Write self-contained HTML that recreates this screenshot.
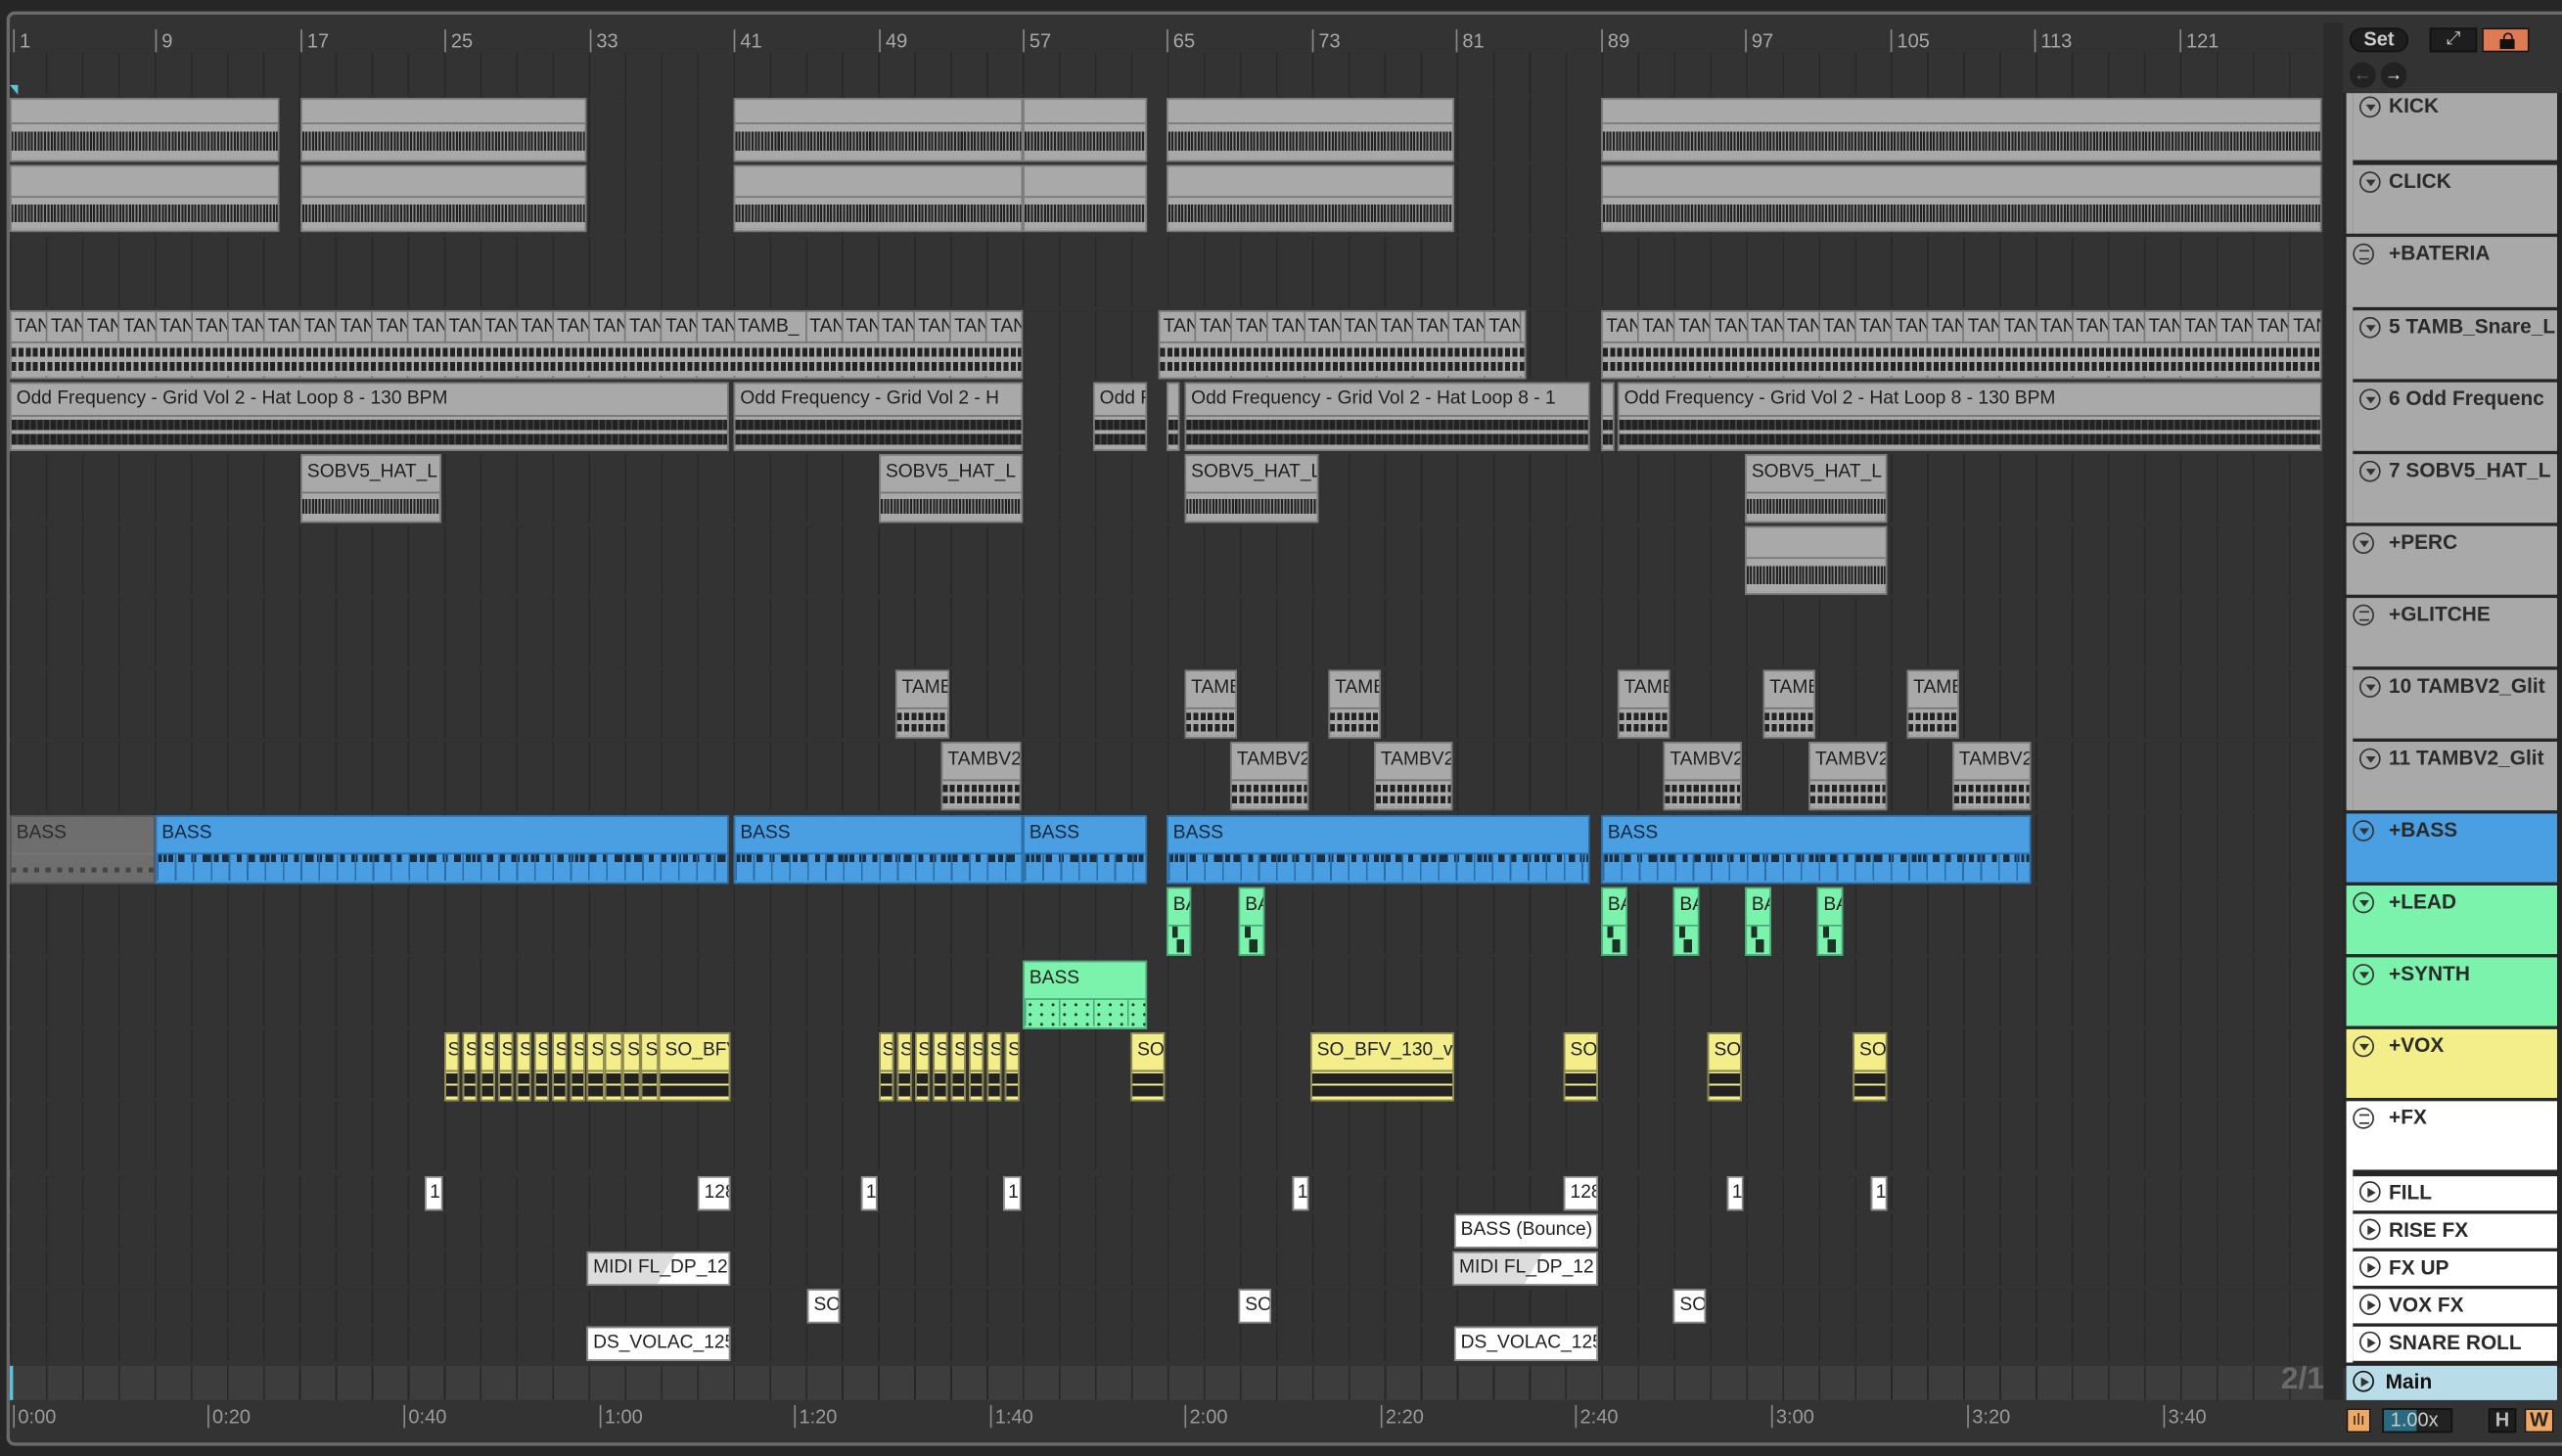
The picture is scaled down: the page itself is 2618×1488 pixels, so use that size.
<!DOCTYPE html>
<html><head><meta charset="utf-8"><style>
*{margin:0;padding:0;box-sizing:border-box}
html,body{width:2618px;height:1488px;overflow:hidden;background:#262626}
#s{position:absolute;left:0;top:0;width:1568px;height:891px;transform:scale(1.66964);transform-origin:0 0;background:#262626;font-family:"Liberation Sans",sans-serif}
.frame{position:absolute;left:4px;top:7px;width:1570px;height:878px;border:2px solid #6a6a6a;border-radius:5px;background:#333}
.lane{position:absolute;left:6px;width:1416px;background-color:#333;background-image:repeating-linear-gradient(90deg,#282828 0 1px,transparent 1px 22.14px)}
.num{position:absolute;top:18px;font-size:12px;color:#a8a8a8;border-left:1px solid #888;padding-left:3px;height:14px;line-height:14px}
.tm{position:absolute;top:860px;font-size:12px;color:#9a9a9a;border-left:1px solid #888;padding-left:2px;line-height:14px}
.c{position:absolute;overflow:hidden;background:#a9a9a9;font-size:11.5px;color:#1e1e1e;line-height:14px;padding-left:3px;white-space:nowrap;border:1px solid #7a7a7a}
.c i{position:absolute;left:0;right:0;top:16px;bottom:1px;border-top:1px solid #777}
.wk i{background:linear-gradient(#a9a9a9 0 22%,transparent 22% 78%,#a9a9a9 78%),repeating-linear-gradient(90deg,#222 0 1.2px,#8a8a8a 1.2px 2px)}
.wa i{background:linear-gradient(#a9a9a9 0 10%,transparent 10% 44%,#a9a9a9 44% 56%,transparent 56% 90%,#a9a9a9 90%),repeating-linear-gradient(90deg,#222 0 3px,#444 3px 4px)}
.wt i{background:linear-gradient(#a9a9a9 0 15%,transparent 15% 42%,#a9a9a9 42% 58%,transparent 58% 85%,#a9a9a9 85%),repeating-linear-gradient(90deg,#222 0 3px,#a9a9a9 3px 4.4px)}
.b{background:#4a9fe3;border-color:#2d6fa6;color:#10243a}
.b i{border-top-color:#2d6fa6;background:repeating-linear-gradient(90deg,#2a6ea8 0 1px,transparent 1px 11px),linear-gradient(transparent 0 30%,#4a9fe3 30%),repeating-linear-gradient(90deg,#1b2d40 0 3px,transparent 3px 7px),repeating-linear-gradient(90deg,transparent 0 4px,#1b2d40 4px 6px,transparent 6px 9px)}
.g{background:#7cf3ac;border-color:#4aa87a}
.g i{border-top-color:#4aa87a;background:linear-gradient(90deg,transparent 0 20%,#1a3325 20% 45%,transparent 45%) 0 0/100% 45% no-repeat,linear-gradient(90deg,transparent 0 40%,#1a3325 40% 75%,transparent 75%) 0 100%/100% 50% no-repeat}
.y{background:#f3ee8a;border-color:#8a8650}
.y i{border-top-color:#8a8650;background:linear-gradient(#f3ee8a 0 6%,transparent 6% 46%,#f3ee8a 46% 54%,transparent 54% 94%,#f3ee8a 94%),#222}
.wh{background:#fff;border-color:#888;color:#222;line-height:18px}
.h{position:absolute;left:1436px;width:129px;background:#a9a9a9;font-size:12.5px;font-weight:bold;color:#2a2a2a;padding-left:26px;line-height:16px;white-space:nowrap;overflow:hidden}
.h.in{left:1440px;width:125px;padding-left:22px}
.ic{position:absolute;left:4px;top:2px;width:13px;height:13px;border:1.3px solid #333;border-radius:50%}
.ic.d:after{content:"";position:absolute;left:2.5px;top:4px;border-left:3.5px solid transparent;border-right:3.5px solid transparent;border-top:4px solid #333}
.ic.p:after{content:"";position:absolute;left:4px;top:2.5px;border-top:3.5px solid transparent;border-bottom:3.5px solid transparent;border-left:5px solid #333}
.ic.l:after{content:"";position:absolute;left:2.5px;top:3px;width:6px;height:4px;border-top:1px solid #333;border-bottom:1px solid #333}
.ts{display:inline-block;width:22.14px;height:100%;border-right:1px solid #777;overflow:hidden;padding-left:2px;vertical-align:top}
</style></head><body><div id="s">
<div class="frame"></div>
<div style="position:absolute;left:6px;top:14px;width:1416px;height:16px;background:#333"></div>
<div class="num" style="left:8px">1</div><div class="num" style="left:95px">9</div><div class="num" style="left:184px">17</div><div class="num" style="left:272px">25</div><div class="num" style="left:361px">33</div><div class="num" style="left:449px">41</div><div class="num" style="left:538px">49</div><div class="num" style="left:626px">57</div><div class="num" style="left:714px">65</div><div class="num" style="left:803px">73</div><div class="num" style="left:891px">81</div><div class="num" style="left:980px">89</div><div class="num" style="left:1068px">97</div><div class="num" style="left:1157px">105</div><div class="num" style="left:1245px">113</div><div class="num" style="left:1334px">121</div>
<div class="lane" style="top:32px;height:26px"></div>
<div style="position:absolute;left:6px;top:52px;border-left:5px solid transparent;border-top:6px solid #5cc3d8"></div>
<div class="lane" style="top:59px;height:40px"></div>
<div class="lane" style="top:101px;height:42px"></div>
<div class="lane" style="top:145px;height:43px"></div>
<div class="lane" style="top:190px;height:42px"></div>
<div class="lane" style="top:234px;height:42px"></div>
<div class="lane" style="top:278px;height:42px"></div>
<div class="lane" style="top:322px;height:42px"></div>
<div class="lane" style="top:366px;height:42px"></div>
<div class="lane" style="top:410px;height:42px"></div>
<div class="lane" style="top:454px;height:42px"></div>
<div class="lane" style="top:498px;height:42px"></div>
<div class="lane" style="top:542px;height:42px"></div>
<div class="lane" style="top:586px;height:42px"></div>
<div class="lane" style="top:630px;height:42px"></div>
<div class="lane" style="top:674px;height:42px"></div>
<div class="lane" style="top:720px;height:21px"></div>
<div class="lane" style="top:743px;height:21px"></div>
<div class="lane" style="top:766px;height:21px"></div>
<div class="lane" style="top:789px;height:21px"></div>
<div class="lane" style="top:812px;height:21px"></div>
<div class="lane" style="top:836px;height:21px;background-color:#3d3d3d"></div>
<div style="position:absolute;left:6px;top:836px;width:2px;height:21px;background:#5cc3d8"></div>
<div style="position:absolute;left:1396px;top:834px;font-size:19px;font-weight:bold;color:#6a6a6a">2/1</div>
<div class="tm" style="left:8px">0:00</div><div class="tm" style="left:127px">0:20</div><div class="tm" style="left:247px">0:40</div><div class="tm" style="left:367px">1:00</div><div class="tm" style="left:486px">1:20</div><div class="tm" style="left:606px">1:40</div><div class="tm" style="left:725px">2:00</div><div class="tm" style="left:845px">2:20</div><div class="tm" style="left:964px">2:40</div><div class="tm" style="left:1084px">3:00</div><div class="tm" style="left:1204px">3:20</div><div class="tm" style="left:1324px">3:40</div>
<div style="position:absolute;left:1422px;top:14px;width:12px;height:843px;background:#2b2b2b"></div>

<div class="c wk" style="left:6px;top:60px;width:165px;height:39px"><i style="top:14px"></i></div>
<div class="c wk" style="left:184px;top:60px;width:175px;height:39px"><i style="top:14px"></i></div>
<div class="c wk" style="left:449px;top:60px;width:177px;height:39px"><i style="top:14px"></i></div>
<div class="c wk" style="left:626px;top:60px;width:76px;height:39px"><i style="top:14px"></i></div>
<div class="c wk" style="left:714px;top:60px;width:176px;height:39px"><i style="top:14px"></i></div>
<div class="c wk" style="left:980px;top:60px;width:441px;height:39px"><i style="top:14px"></i></div>
<div class="c wk" style="left:6px;top:101px;width:165px;height:41px"><i style="top:18px"></i></div>
<div class="c wk" style="left:184px;top:101px;width:175px;height:41px"><i style="top:18px"></i></div>
<div class="c wk" style="left:449px;top:101px;width:177px;height:41px"><i style="top:18px"></i></div>
<div class="c wk" style="left:626px;top:101px;width:76px;height:41px"><i style="top:18px"></i></div>
<div class="c wk" style="left:714px;top:101px;width:176px;height:41px"><i style="top:18px"></i></div>
<div class="c wk" style="left:980px;top:101px;width:441px;height:41px"><i style="top:18px"></i></div>
<div class="c wt" style="left:6px;top:190px;width:620px;height:42px;padding:0;line-height:18px"><span class="ts">TAN</span><span class="ts">TAN</span><span class="ts">TAN</span><span class="ts">TAN</span><span class="ts">TAN</span><span class="ts">TAN</span><span class="ts">TAN</span><span class="ts">TAN</span><span class="ts">TAN</span><span class="ts">TAN</span><span class="ts">TAN</span><span class="ts">TAN</span><span class="ts">TAN</span><span class="ts">TAN</span><span class="ts">TAN</span><span class="ts">TAN</span><span class="ts">TAN</span><span class="ts">TAN</span><span class="ts">TAN</span><span class="ts">TAN</span><span class="ts" style="width:44px">TAMB_</span><span class="ts">TAN</span><span class="ts">TAN</span><span class="ts">TAN</span><span class="ts">TAN</span><span class="ts">TAN</span><span class="ts">TAN</span><i style="top:18px"></i></div>
<div class="c wt" style="left:709px;top:190px;width:225px;height:42px;padding:0;line-height:18px"><span class="ts">TAN</span><span class="ts">TAN</span><span class="ts">TAN</span><span class="ts">TAN</span><span class="ts">TAN</span><span class="ts">TAN</span><span class="ts">TAN</span><span class="ts">TAN</span><span class="ts">TAN</span><span class="ts">TAN</span><i style="top:18px"></i></div>
<div class="c wt" style="left:980px;top:190px;width:441px;height:42px;padding:0;line-height:18px"><span class="ts">TAN</span><span class="ts">TAN</span><span class="ts">TAN</span><span class="ts">TAN</span><span class="ts">TAN</span><span class="ts">TAN</span><span class="ts">TAN</span><span class="ts">TAN</span><span class="ts">TAN</span><span class="ts">TAN</span><span class="ts">TAN</span><span class="ts">TAN</span><span class="ts">TAN</span><span class="ts">TAN</span><span class="ts">TAN</span><span class="ts">TAN</span><span class="ts">TAN</span><span class="ts">TAN</span><span class="ts">TAN</span><span class="ts">TAN</span><i style="top:18px"></i></div>
<div class="c wa" style="left:6px;top:234px;width:440px;height:42px;line-height:18px">Odd Frequency - Grid Vol 2 - Hat Loop 8 - 130 BPM<i style="top:19px"></i></div>
<div class="c wa" style="left:449px;top:234px;width:177px;height:42px;line-height:18px">Odd Frequency - Grid Vol 2 - H<i style="top:19px"></i></div>
<div class="c wa" style="left:669px;top:234px;width:33px;height:42px;line-height:18px">Odd F<i style="top:19px"></i></div>
<div class="c wa" style="left:714px;top:234px;width:8px;height:42px"><i style="top:19px"></i></div>
<div class="c wa" style="left:725px;top:234px;width:248px;height:42px;line-height:18px">Odd Frequency - Grid Vol 2 - Hat Loop 8 - 1<i style="top:19px"></i></div>
<div class="c wa" style="left:980px;top:234px;width:8px;height:42px"><i style="top:19px"></i></div>
<div class="c wa" style="left:990px;top:234px;width:431px;height:42px;line-height:18px">Odd Frequency - Grid Vol 2 - Hat Loop 8 - 130 BPM<i style="top:19px"></i></div>
<div class="c wk" style="left:184px;top:278px;width:86px;height:42px;line-height:20px">SOBV5_HAT_L<i style="top:22px"></i></div>
<div class="c wk" style="left:538px;top:278px;width:88px;height:42px;line-height:20px">SOBV5_HAT_L<i style="top:22px"></i></div>
<div class="c wk" style="left:725px;top:278px;width:82px;height:42px;line-height:20px">SOBV5_HAT_L<i style="top:22px"></i></div>
<div class="c wk" style="left:1068px;top:278px;width:87px;height:42px;line-height:20px">SOBV5_HAT_L<i style="top:22px"></i></div>
<div class="c wk" style="left:1068px;top:322px;width:87px;height:42px"><i style="top:18px"></i></div>
<div class="c wt" style="left:548px;top:410px;width:33px;height:42px;line-height:20px">TAMB<i style="top:22px"></i></div>
<div class="c wt" style="left:725px;top:410px;width:32px;height:42px;line-height:20px">TAMB<i style="top:22px"></i></div>
<div class="c wt" style="left:813px;top:410px;width:32px;height:42px;line-height:20px">TAMB<i style="top:22px"></i></div>
<div class="c wt" style="left:990px;top:410px;width:32px;height:42px;line-height:20px">TAMB<i style="top:22px"></i></div>
<div class="c wt" style="left:1079px;top:410px;width:32px;height:42px;line-height:20px">TAMB<i style="top:22px"></i></div>
<div class="c wt" style="left:1167px;top:410px;width:32px;height:42px;line-height:20px">TAMB<i style="top:22px"></i></div>
<div class="c wt" style="left:576px;top:454px;width:49px;height:42px;line-height:20px">TAMBV2<i style="top:22px"></i></div>
<div class="c wt" style="left:753px;top:454px;width:48px;height:42px;line-height:20px">TAMBV2<i style="top:22px"></i></div>
<div class="c wt" style="left:841px;top:454px;width:48px;height:42px;line-height:20px">TAMBV2<i style="top:22px"></i></div>
<div class="c wt" style="left:1018px;top:454px;width:48px;height:42px;line-height:20px">TAMBV2<i style="top:22px"></i></div>
<div class="c wt" style="left:1107px;top:454px;width:48px;height:42px;line-height:20px">TAMBV2<i style="top:22px"></i></div>
<div class="c wt" style="left:1195px;top:454px;width:48px;height:42px;line-height:20px">TAMBV2<i style="top:22px"></i></div>
<div class="c" style="left:6px;top:499px;width:89px;height:42px;background:#6e6e6e;color:#2a2a2a;line-height:20px;border-color:#555">BASS<i style="top:22px;background:repeating-linear-gradient(90deg,#444 0 3px,transparent 3px 7px) 0 60%/100% 3px no-repeat"></i></div>
<div class="c b" style="left:95px;top:499px;width:351px;height:42px;line-height:20px">BASS<i style="top:22px"></i></div>
<div class="c b" style="left:449px;top:499px;width:177px;height:42px;line-height:20px">BASS<i style="top:22px"></i></div>
<div class="c b" style="left:626px;top:499px;width:76px;height:42px;line-height:20px">BASS<i style="top:22px"></i></div>
<div class="c b" style="left:714px;top:499px;width:259px;height:42px;line-height:20px">BASS<i style="top:22px"></i></div>
<div class="c b" style="left:980px;top:499px;width:263px;height:42px;line-height:20px">BASS<i style="top:22px"></i></div>
<div class="c g" style="left:714px;top:543px;width:15px;height:42px;line-height:20px">BA<i style="top:22px"></i></div>
<div class="c g" style="left:758px;top:543px;width:16px;height:42px;line-height:20px">BA<i style="top:22px"></i></div>
<div class="c g" style="left:980px;top:543px;width:16px;height:42px;line-height:20px">BA<i style="top:22px"></i></div>
<div class="c g" style="left:1024px;top:543px;width:16px;height:42px;line-height:20px">BA<i style="top:22px"></i></div>
<div class="c g" style="left:1068px;top:543px;width:16px;height:42px;line-height:20px">BA<i style="top:22px"></i></div>
<div class="c g" style="left:1112px;top:543px;width:16px;height:42px;line-height:20px">BA<i style="top:22px"></i></div>
<div class="c g" style="left:626px;top:588px;width:76px;height:42px;line-height:20px">BASS<i style="top:22px;background:repeating-linear-gradient(90deg,#4aa87a 0 1px,transparent 1px 21px),radial-gradient(circle,#1a3325 0.8px,transparent 1px) 0 0/7px 6px"></i></div>
<div class="c y" style="left:272px;top:632px;width:9px;height:42px;line-height:20px;padding-left:1px">S<i style="top:22px"></i></div>
<div class="c y" style="left:283px;top:632px;width:9px;height:42px;line-height:20px;padding-left:1px">S<i style="top:22px"></i></div>
<div class="c y" style="left:294px;top:632px;width:9px;height:42px;line-height:20px;padding-left:1px">S<i style="top:22px"></i></div>
<div class="c y" style="left:305px;top:632px;width:9px;height:42px;line-height:20px;padding-left:1px">S<i style="top:22px"></i></div>
<div class="c y" style="left:316px;top:632px;width:9px;height:42px;line-height:20px;padding-left:1px">S<i style="top:22px"></i></div>
<div class="c y" style="left:327px;top:632px;width:9px;height:42px;line-height:20px;padding-left:1px">S<i style="top:22px"></i></div>
<div class="c y" style="left:338px;top:632px;width:9px;height:42px;line-height:20px;padding-left:1px">S<i style="top:22px"></i></div>
<div class="c y" style="left:349px;top:632px;width:9px;height:42px;line-height:20px;padding-left:1px">S<i style="top:22px"></i></div>
<div class="c y" style="left:359px;top:632px;width:11px;height:42px;line-height:20px;padding-left:2px">S<i style="top:22px"></i></div>
<div class="c y" style="left:370px;top:632px;width:11px;height:42px;line-height:20px;padding-left:2px">S<i style="top:22px"></i></div>
<div class="c y" style="left:381px;top:632px;width:11px;height:42px;line-height:20px;padding-left:2px">S<i style="top:22px"></i></div>
<div class="c y" style="left:392px;top:632px;width:11px;height:42px;line-height:20px;padding-left:2px">S<i style="top:22px"></i></div>
<div class="c y" style="left:403px;top:632px;width:44px;height:42px;line-height:20px">SO_BFV<i style="top:22px"></i></div>
<div class="c y" style="left:538px;top:632px;width:9px;height:42px;line-height:20px;padding-left:1px">S<i style="top:22px"></i></div>
<div class="c y" style="left:549px;top:632px;width:9px;height:42px;line-height:20px;padding-left:1px">S<i style="top:22px"></i></div>
<div class="c y" style="left:560px;top:632px;width:9px;height:42px;line-height:20px;padding-left:1px">S<i style="top:22px"></i></div>
<div class="c y" style="left:571px;top:632px;width:9px;height:42px;line-height:20px;padding-left:1px">S<i style="top:22px"></i></div>
<div class="c y" style="left:582px;top:632px;width:9px;height:42px;line-height:20px;padding-left:1px">S<i style="top:22px"></i></div>
<div class="c y" style="left:593px;top:632px;width:9px;height:42px;line-height:20px;padding-left:1px">S<i style="top:22px"></i></div>
<div class="c y" style="left:604px;top:632px;width:9px;height:42px;line-height:20px;padding-left:1px">S<i style="top:22px"></i></div>
<div class="c y" style="left:615px;top:632px;width:9px;height:42px;line-height:20px;padding-left:1px">S<i style="top:22px"></i></div>
<div class="c y" style="left:692px;top:632px;width:21px;height:42px;line-height:20px">SO_<i style="top:22px"></i></div>
<div class="c y" style="left:802px;top:632px;width:88px;height:42px;line-height:20px">SO_BFV_130_v<i style="top:22px"></i></div>
<div class="c y" style="left:957px;top:632px;width:21px;height:42px;line-height:20px">SO_<i style="top:22px"></i></div>
<div class="c y" style="left:1045px;top:632px;width:21px;height:42px;line-height:20px">SO_<i style="top:22px"></i></div>
<div class="c y" style="left:1134px;top:632px;width:21px;height:42px;line-height:20px">SO_<i style="top:22px"></i></div>
<div class="c wh" style="left:260px;top:720px;width:11px;height:21px;padding-left:2px">1</div>
<div class="c wh" style="left:427px;top:720px;width:20px;height:21px">128</div>
<div class="c wh" style="left:527px;top:720px;width:10px;height:21px;padding-left:2px">1</div>
<div class="c wh" style="left:614px;top:720px;width:11px;height:21px;padding-left:2px">1</div>
<div class="c wh" style="left:791px;top:720px;width:10px;height:21px;padding-left:2px">1</div>
<div class="c wh" style="left:957px;top:720px;width:21px;height:21px">128</div>
<div class="c wh" style="left:1057px;top:720px;width:10px;height:21px;padding-left:2px">1</div>
<div class="c wh" style="left:1145px;top:720px;width:10px;height:21px;padding-left:2px">1</div>
<div class="c wh" style="left:890px;top:743px;width:88px;height:21px">BASS (Bounce)</div>
<div class="c wh" style="left:359px;top:766px;width:88px;height:21px;background:linear-gradient(120deg,#ddd 0 55%,#fff 55%)">MIDI FL_DP_12</div>
<div class="c wh" style="left:889px;top:766px;width:89px;height:21px;background:linear-gradient(120deg,#ddd 0 55%,#fff 55%)">MIDI FL_DP_12</div>
<div class="c wh" style="left:494px;top:789px;width:20px;height:21px">SO_</div>
<div class="c wh" style="left:758px;top:789px;width:20px;height:21px">SO_</div>
<div class="c wh" style="left:1024px;top:789px;width:20px;height:21px">SO_</div>
<div class="c wh" style="left:359px;top:812px;width:88px;height:21px">DS_VOLAC_125</div>
<div class="c wh" style="left:890px;top:812px;width:88px;height:21px">DS_VOLAC_125</div>

<div style="position:absolute;left:1434px;top:14px;width:134px;height:43px;background:#333"></div>
<div style="position:absolute;left:1438px;top:17px;width:36px;height:15px;border-radius:8px;background:#1e1e1e;border:1px solid #111;color:#ccc;font-size:12px;font-weight:bold;text-align:center;line-height:13px">Set</div>
<div style="position:absolute;left:1487px;top:17px;width:29px;height:15px;background:#1e1e1e;border:1px solid #111;color:#ccc;font-size:11px;text-align:center;line-height:13px">⤢</div>
<div style="position:absolute;left:1519px;top:17px;width:29px;height:15px;background:#e07a55;border:1px solid #111"><div style="position:absolute;left:10px;top:6px;width:9px;height:6px;background:#111"></div><div style="position:absolute;left:11.5px;top:2px;width:6px;height:6px;border:1.5px solid #111;border-bottom:none;border-radius:3px 3px 0 0"></div></div>
<div style="position:absolute;left:1438px;top:38px;width:16px;height:16px;border-radius:50%;background:#222;color:#666;font-size:11px;text-align:center;line-height:16px">←</div>
<div style="position:absolute;left:1457px;top:38px;width:16px;height:16px;border-radius:50%;background:#222;color:#eee;font-size:11px;text-align:center;line-height:16px">→</div>
<div style="position:absolute;left:1434px;top:57px;width:134px;height:780px;background:#262626"></div>
<div style="position:absolute;left:1436px;top:57px;width:4px;height:86px;background:#a9a9a9"></div>
<div style="position:absolute;left:1436px;top:188px;width:4px;height:132px;background:#a9a9a9"></div>
<div style="position:absolute;left:1436px;top:408px;width:4px;height:88px;background:#a9a9a9"></div>
<div style="position:absolute;left:1436px;top:716px;width:4px;height:118px;background:#fff"></div>
<div class="h in" style="top:57px;height:41px"><span class="ic d"></span>KICK</div>
<div class="h in" style="top:101px;height:42px;padding-top:2px"><span class="ic d" style="top:4px"></span>CLICK</div>
<div class="h" style="top:145px;height:43px;padding-top:2px"><span class="ic l" style="top:4px"></span>+BATERIA</div>
<div class="h in" style="top:190px;height:42px;padding-top:2px"><span class="ic d" style="top:4px"></span>5 TAMB_Snare_L</div>
<div class="h in" style="top:234px;height:42px;padding-top:2px"><span class="ic d" style="top:4px"></span>6 Odd Frequenc</div>
<div class="h in" style="top:278px;height:42px;padding-top:2px"><span class="ic d" style="top:4px"></span>7 SOBV5_HAT_L</div>
<div class="h" style="top:322px;height:42px;padding-top:2px"><span class="ic d" style="top:4px"></span>+PERC</div>
<div class="h" style="top:366px;height:42px;padding-top:2px"><span class="ic l" style="top:4px"></span>+GLITCHE</div>
<div class="h in" style="top:410px;height:42px;padding-top:2px"><span class="ic d" style="top:4px"></span>10 TAMBV2_Glit</div>
<div class="h in" style="top:454px;height:42px;padding-top:2px"><span class="ic d" style="top:4px"></span>11 TAMBV2_Glit</div>
<div class="h" style="top:498px;height:42px;padding-top:2px;background:#4a9fe3"><span class="ic d" style="top:4px"></span>+BASS</div>
<div class="h" style="top:542px;height:42px;padding-top:2px;background:#7cf3ac"><span class="ic d" style="top:4px"></span>+LEAD</div>
<div class="h" style="top:586px;height:42px;padding-top:2px;background:#7cf3ac"><span class="ic d" style="top:4px"></span>+SYNTH</div>
<div class="h" style="top:630px;height:42px;padding-top:2px;background:#f3ee8a"><span class="ic d" style="top:4px"></span>+VOX</div>
<div class="h" style="top:674px;height:42px;padding-top:2px;background:#fff"><span class="ic l" style="top:4px"></span>+FX</div>
<div class="h in" style="top:720px;height:21px;padding-top:2px;background:#fff"><span class="ic p" style="top:3px"></span>FILL</div>
<div class="h in" style="top:743px;height:21px;padding-top:2px;background:#fff"><span class="ic p" style="top:3px"></span>RISE FX</div>
<div class="h in" style="top:766px;height:21px;padding-top:2px;background:#fff"><span class="ic p" style="top:3px"></span>FX UP</div>
<div class="h in" style="top:789px;height:21px;padding-top:2px;background:#fff"><span class="ic p" style="top:3px"></span>VOX FX</div>
<div class="h in" style="top:812px;height:21px;padding-top:2px;background:#fff"><span class="ic p" style="top:3px"></span>SNARE ROLL</div>
<div class="h" style="top:836px;height:21px;padding-top:2px;background:#b8dde8;color:#111;padding-left:24px"><span class="ic p" style="top:3px;border-color:#111"></span>Main</div>
<div style="position:absolute;left:1436px;top:862px;width:15px;height:15px;background:#f0a860;border:1px solid #111;font-size:10px;text-align:center;line-height:13px;color:#222">ılı</div>
<div style="position:absolute;left:1458px;top:862px;width:43px;height:15px;background:#222;border:1px solid #111;font-size:12px;color:#ccc;line-height:13px;padding-left:4px"><span style="position:absolute;left:0;top:0;width:20px;height:13px;background:#2a6a80"></span><span style="position:relative">1.00x</span></div>
<div style="position:absolute;left:1523px;top:862px;width:17px;height:15px;background:#1e1e1e;border:1px solid #111;font-size:12px;font-weight:bold;color:#bbb;text-align:center;line-height:13px">H</div>
<div style="position:absolute;left:1545px;top:862px;width:18px;height:15px;background:#f0a860;border:1px solid #111;font-size:12px;font-weight:bold;color:#222;text-align:center;line-height:13px">W</div>
</div></body></html>
